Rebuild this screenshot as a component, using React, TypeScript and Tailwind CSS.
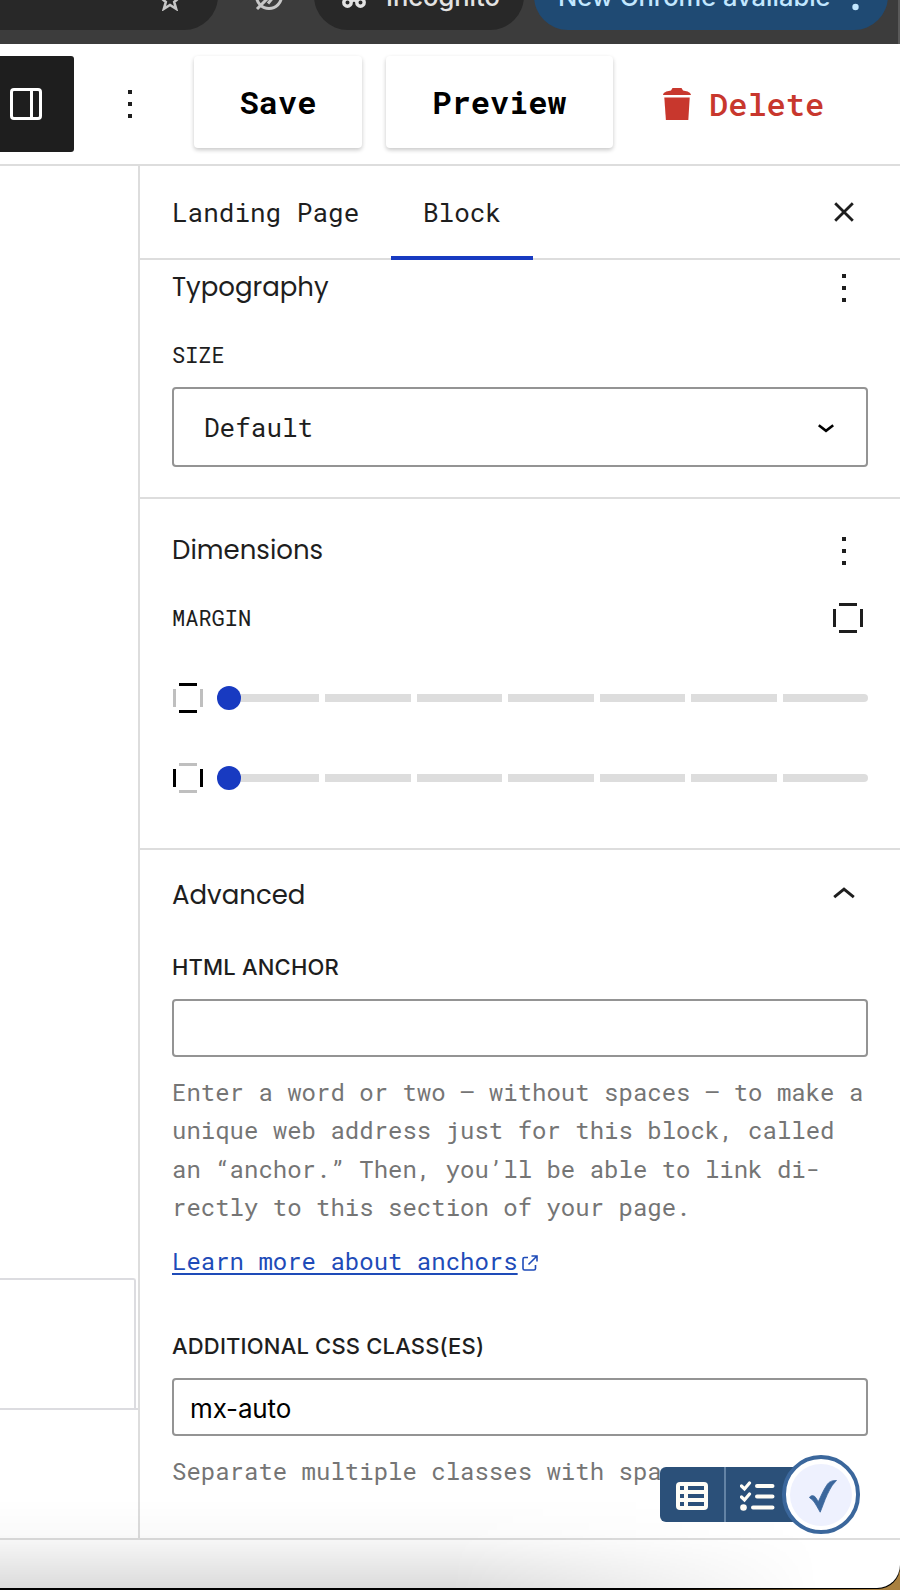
import type { ReactNode } from "react";

const MONO = "font-['Roboto_Mono','DejaVu_Sans_Mono',monospace]";
const INTER = "font-['Inter',sans-serif]";

function Dots() {
  return (
    <svg width="4" height="28" viewBox="0 0 4 28" fill="#1e1e1e" shapeRendering="crispEdges">
      <rect width="4" height="4" />
      <rect y="12" width="4" height="4" />
      <rect y="24" width="4" height="4" />
    </svg>
  );
}

function SidesIcon({ vertical, horizontal }: { vertical: string; horizontal: string }) {
  return (
    <svg width="30" height="30" viewBox="0 0 30 30" className="shrink-0" shapeRendering="crispEdges">
      <rect x="6" y="0" width="18" height="3" fill={vertical} />
      <rect x="6" y="27" width="18" height="3" fill={vertical} />
      <rect x="0" y="6" width="3" height="18" fill={horizontal} />
      <rect x="27" y="6" width="3" height="18" fill={horizontal} />
    </svg>
  );
}

function BrowserBar() {
  return (
    <div className="relative flex h-[44px] w-full items-start overflow-hidden border-r-2 border-[#5a5a5a] bg-[#3c3c3c]">
      <div className="-mt-[38px] h-[68px] w-[218px] shrink-0 rounded-r-full bg-[#282828] pt-[27px] pl-[159px]">
        <svg width="22" height="22" viewBox="0 0 22 22" fill="none" stroke="#c7c7c7" strokeWidth="2.6">
          <path d="M11 1.5 13.6 8l6.8.5-5.2 4.5 1.9 6.8L11 16l-6.1 3.800 1.900-6.800L1.6 8.5 8.4 8z" />
        </svg>
      </div>
      <div className="-mt-[21px] flex w-[96px] shrink-0 justify-center pl-[6px]">
        <svg width="34" height="34" viewBox="0 0 34 34" fill="none" stroke="#c7c7c7" strokeWidth="3">
          <circle cx="17" cy="17" r="12.5" />
          <path d="M5 30 30 5M16 24.500l5-6" />
        </svg>
      </div>
      <div className="-mt-[38px] flex h-[68px] w-[210px] shrink-0 items-center rounded-full bg-[#282828] pl-[28px]">
        <svg width="24" height="28" viewBox="0 0 24 28" fill="none" stroke="#e3e3e3" strokeWidth="3.4">
          <circle cx="5.5" cy="20.5" r="3.7" />
          <circle cx="18.5" cy="20.5" r="3.7" />
          <path d="M9 19.500q3-2 6 0" strokeWidth="2.5" />
          <path d="M1 12h22" />
        </svg>
        <span className={`${INTER} mt-[2px] ml-[20px] text-[25.5px] leading-[34px] font-medium text-[#e3e3e3]`}>
          Incognito
        </span>
      </div>
      <div className="-mt-[38px] ml-[10px] flex h-[68px] w-[354px] shrink-0 items-center rounded-full bg-[#1f4a73] pl-[24px]">
        <span
          className={`${INTER} mt-[2px] w-[271px] text-[25.5px] leading-[34px] font-medium whitespace-nowrap text-[#c2e7ff]`}
        >
          New Chrome available
        </span>
        <svg width="7" height="30" viewBox="0 0 7 30" fill="#c2e7ff" className="ml-[23px]">
          <circle cx="3.5" cy="4" r="3.2" />
          <circle cx="3.5" cy="15" r="3.2" />
          <circle cx="3.5" cy="26" r="3.2" />
        </svg>
      </div>
    </div>
  );
}

function EditorHeader() {
  return (
    <div className={`${MONO} flex h-[122px] items-start border-b-2 border-[#ddd] bg-white pt-[12px]`}>
      <div className="flex h-[96px] w-[74px] shrink-0 items-center rounded-r-[3px] bg-[#1e1e1e] pl-[10px]">
        <svg width="32" height="32" viewBox="0 0 32 32" fill="none" stroke="#fff" strokeWidth="3">
          <rect x="1.5" y="1.5" width="29" height="29" rx="2.5" />
          <path d="M21.500 2v28" />
        </svg>
      </div>
      <div className="ml-[54px] flex h-[92px] shrink-0 items-center pt-[4px]">
        <Dots />
      </div>
      <button className="ml-[62px] flex h-[92px] w-[168px] shrink-0 items-center justify-center rounded-[4px] bg-white text-[32px] font-bold text-black shadow-[0_2px_4px_rgba(0,0,0,0.22)]">
        Save
      </button>
      <button className="ml-[24px] flex h-[92px] w-[227px] shrink-0 items-center justify-center rounded-[4px] bg-white text-[32px] font-bold text-black shadow-[0_2px_4px_rgba(0,0,0,0.22)]">
        Preview
      </button>
      <button className="ml-[50px] flex h-[96px] shrink-0 items-center text-[32px] font-medium text-[#c8372d]">
        <svg width="28" height="32" viewBox="0 0 28 32" fill="currentColor">
          <path d="M9.500 0h9l1.500 2.500c2.500.7 7.300.8 8 4.500H0c.7-3.700 5.500-3.800 8-4.500z" />
          <path d="M1.300 9.500h25.400L25.300 32H2.900z" />
        </svg>
        <span className="ml-[18px]">Delete</span>
      </button>
    </div>
  );
}

function Tabs() {
  return (
    <div className={`${MONO} flex h-[94px] shrink-0 border-b-2 border-[#ddd] text-[26px] text-[#1e1e1e]`}>
      <div className="flex h-[92px] w-[251px] items-center pl-[32px]">Landing Page</div>
      <div className="h-[94px] w-[142px] border-b-4 border-[#183ac1] text-center leading-[92px]">Block</div>
      <svg
        width="20"
        height="20"
        viewBox="0 0 20 20"
        fill="none"
        stroke="#1e1e1e"
        strokeWidth="2.8"
        className="mt-[36px] ml-[301px]"
      >
        <path d="M1.200 1.200l17.600 17.600M18.800 1.200 1.200 18.800" />
      </svg>
    </div>
  );
}

function Heading({ children }: { children: ReactNode }) {
  return <h2 className="font-['Poppins','Inter',sans-serif] text-[26px] leading-[40px] text-[#1e1e1e]">{children}</h2>;
}

const segments = [90, 86, 85, 86, 85, 86, 85];

function Slider() {
  return (
    <div className="relative ml-[26px] flex-1">
      <div className="flex h-[24px] items-center gap-[6px]">
        {segments.map((w, i) => (
          <span key={i} className="h-[8px] bg-[#ddd] last:rounded-r-full" style={{ width: w }} />
        ))}
      </div>
      <span className="absolute top-0 -left-[12px] size-[24px] rounded-full bg-[#183ac1]" />
    </div>
  );
}

function Help({ children }: { children: ReactNode }) {
  return (
    <p className={`${MONO} mt-[16px] text-[24px] leading-[38.4px] whitespace-nowrap text-[#757575]`}>{children}</p>
  );
}

function FieldLabel({ children }: { children: ReactNode }) {
  return (
    <label className={`${INTER} block text-[22px] leading-[30px] font-[450] tracking-[0.18px] text-[#1e1e1e]`}>
      {children}
    </label>
  );
}

function Panel() {
  return (
    <aside className="flex w-[762px] shrink-0 flex-col border-l-2 border-[#ddd]">
      <Tabs />

      <section className="h-[239px] border-b-2 border-[#ddd] px-[32px]">
        <div className="flex h-[56px] items-center justify-between pr-[22px]">
          <div className="-mt-[2px]">
            <Heading>Typography</Heading>
          </div>
          <Dots />
        </div>
        <div className={`${MONO} mt-[24px] text-[22px] leading-[30px] text-[#1e1e1e]`}>SIZE</div>
        <div className="mt-[17px] flex h-[80px] items-center justify-between rounded-[4px] border-2 border-[#949494] pr-[32px] pl-[30px]">
          <span className={`${MONO} text-[26px] text-[#1e1e1e]`}>Default</span>
          <svg
            width="16"
            height="9"
            viewBox="0 0 16 9"
            fill="none"
            stroke="#000"
            strokeWidth="2.6"
            className="mt-[3px]"
          >
            <path d="M.8 1.2 8 6.8l7.2-5.6" />
          </svg>
        </div>
      </section>

      <section className="h-[351px] border-b-2 border-[#ddd] px-[32px]">
        <div className="flex h-[104px] items-center justify-between pr-[22px]">
          <div className="-mt-[2px]">
            <Heading>Dimensions</Heading>
          </div>
          <Dots />
        </div>
        <div className="flex h-[30px] items-center justify-between pr-[5px]">
          <span className={`${MONO} text-[22px] leading-[30px] text-[#1e1e1e]`}>MARGIN</span>
          <SidesIcon vertical="#1e1e1e" horizontal="#1e1e1e" />
        </div>
        <div className="mt-[50px] flex h-[30px] items-center pl-[1px]">
          <SidesIcon vertical="#000" horizontal="#bfbfbf" />
          <Slider />
        </div>
        <div className="mt-[50px] flex h-[30px] items-center pl-[1px]">
          <SidesIcon vertical="#bfbfbf" horizontal="#000" />
          <Slider />
        </div>
      </section>

      <section className="px-[32px]">
        <div className="flex h-[90px] items-center justify-between pr-[13px]">
          <Heading>Advanced</Heading>
          <svg
            width="22"
            height="12"
            viewBox="0 0 22 12"
            fill="none"
            stroke="#1e1e1e"
            strokeWidth="3"
            className="-mt-[4px]"
          >
            <path d="M1.200 10.200 11 2.200l9.800 8" />
          </svg>
        </div>
        <div className="mt-[12px]">
          <FieldLabel>HTML ANCHOR</FieldLabel>
        </div>
        <div className="mt-[17px] h-[58px] rounded-[4px] border-2 border-[#949494]" />
        <Help>
          Enter a word or two – without spaces – to make a<br />
          unique web address just for this block, called
          <br />
          an “anchor.” Then, you’ll be able to link di-
          <br />
          rectly to this section of your page.
        </Help>
        <div
          className={`${MONO} mt-[15px] flex h-[38px] items-center text-[24px] leading-[38px] text-[#1e4bb8]`}
        >
          <a className="underline decoration-2 underline-offset-[3px]">Learn more about anchors</a>
          <svg
            width="16"
            height="16"
            viewBox="0 0 16 16"
            fill="none"
            stroke="currentColor"
            strokeWidth="1.6"
            className="mt-[5px] ml-[4px]"
          >
            <path d="M6 2.500H2.500A1.500 1.500 0 0 0 1 4v9.500A1.500 1.500 0 0 0 2.500 15h9.500a1.500 1.500 0 0 0 1.500-1.500V10M9.500 1H15v5.500M15 1 6.500 9.500" />
          </svg>
        </div>
        <div className="mt-[51px]">
          <FieldLabel>ADDITIONAL CSS CLASS(ES)</FieldLabel>
        </div>
        <div
          className={`${INTER} mt-[17px] flex h-[58px] items-center rounded-[4px] border-2 border-[#949494] pt-[3px] pl-[16px] text-[26px] tracking-[-0.15px] text-black`}
        >
          mx-auto
        </div>
        <Help>Separate multiple classes with spaces.</Help>
      </section>
    </aside>
  );
}

function FloatingTools() {
  return (
    <div className="absolute top-[1455px] left-[660px] flex h-[79px] items-center">
      <div className="flex h-[55px] w-[140px] rounded-l-[6px] bg-[#2b5079]">
        <div className="flex w-[66px] items-center border-r-2 border-[#6383a5] pt-[3px] pl-[16px]">
          <svg width="32" height="28" viewBox="0 0 32 28">
            <rect width="32" height="28" rx="4" fill="#fffdf6" />
            <path
              d="M4 4h4v4H4zM12 4h16v4H12zM4 12h4v4H4zM12 12h16v4H12zM4 20h4v4H4zM12 20h16v4H12z"
              fill="#2b5079"
            />
          </svg>
        </div>
        <div className="flex items-center pt-[2px] pl-[14px]">
          <svg
            width="35"
            height="30"
            viewBox="0 0 35 30"
            fill="none"
            stroke="#fffdf6"
            strokeWidth="4"
            strokeLinecap="round"
          >
            <path d="M17 5h15.500M17 15.500h15.500M13 26.500h19.500" />
            <path d="M1.500 5 4.500 8l5-6M1.500 16l3 3 5-6" strokeWidth="3.2" />
            <circle cx="3.5" cy="26.5" r="3.3" fill="#fffdf6" stroke="none" />
          </svg>
        </div>
      </div>
      <div className="-ml-[18px] flex h-[79px] w-[78px] items-center justify-center rounded-full border-4 border-[#3b679c] bg-white">
        <div className="flex size-[62px] items-center justify-center rounded-full bg-[#eef1fe]">
          <svg
            width="28"
            height="33"
            viewBox="0 0 28 33"
            fill="#3b679c"
            stroke="#3b679c"
            strokeWidth="0.8"
            className="mt-[3px] ml-[4px]"
          >
            <path d="M.4 17.500C1.500 15.500 4 15 5.800 16.500 7.200 18 8.300 19.800 9.200 22 11.500 17 14.500 10 17.500 5.500 20 1.500 22.500.6 27.500.4 26 2.400 24.800 3.200 23 5.800 19.800 10.800 16.500 18 14.200 24.500L11.200 32.200C9 28.500 6.500 23.500 4 20.500 2.800 19.200 1.500 18.500.4 17.500z" />
          </svg>
        </div>
      </div>
    </div>
  );
}

export default function App() {
  return (
    <div className="h-[1590px] w-[900px] overflow-hidden bg-gradient-to-r from-black from-70% to-[#a9803f] to-97%">
      <div className="h-[1589px] w-[900px] rounded-br-[22px] bg-black">
        <div className="relative flex h-[1588px] w-[900px] flex-col overflow-hidden rounded-br-[23px] bg-white">
          <BrowserBar />
          <EditorHeader />
          <div className="flex h-[1374px] border-b-2 border-[#ddd]">
            <div className="w-[138px] shrink-0 pt-[1112px]">
              <div className="h-[132px] border-b-2 border-[#dcdce0]">
                <div className="h-[130px] w-[136px] rounded-tr-[3px] border-t-2 border-r-2 border-[#dcdce0]" />
              </div>
            </div>
            <Panel />
          </div>
          <div className="pointer-events-none absolute bottom-0 left-0 h-[90px] w-[820px] bg-gradient-to-b from-transparent via-black/[0.02] via-40% to-black/[0.14] [mask-image:linear-gradient(to_right,black_55%,transparent)]" />
          <FloatingTools />
        </div>
      </div>
    </div>
  );
}
